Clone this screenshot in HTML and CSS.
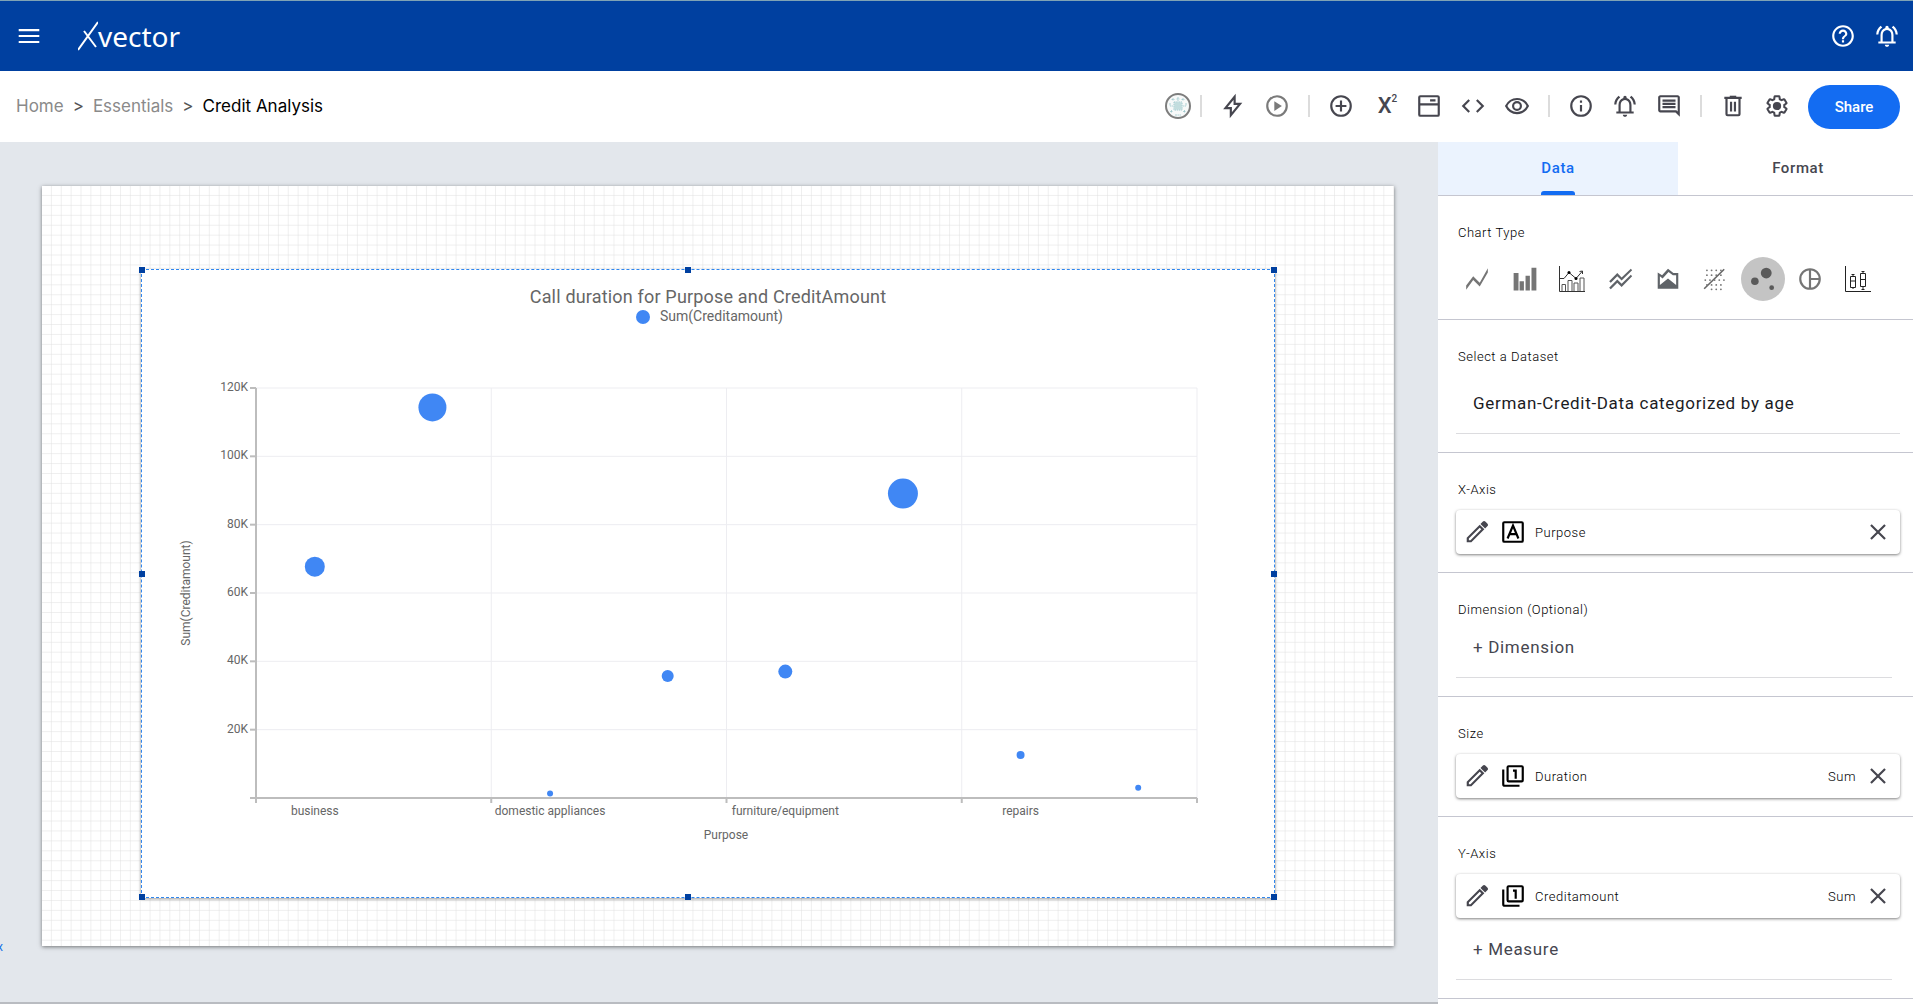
FILE: index.html
```html
<!DOCTYPE html>
<html lang="en">
<head>
    <meta charset="UTF-8">
    <meta name="viewport" content="width=device-width, initial-scale=1.0">
    <title>Xvector - Credit Analysis</title>
    <link rel="stylesheet" href="styles.css">
</head>
<body>
    <!-- shared icons -->
    <svg class="sprite" aria-hidden="true">
        <symbol id="bell" viewBox="0 0 24 24">
            <path d="M12 22c1.1 0 2-.9 2-2h-4c0 1.1.9 2 2 2zm6-6v-5c0-3.07-1.63-5.64-4.5-6.32V4c0-.83-.67-1.5-1.5-1.5s-1.5.67-1.5 1.5v.68C7.64 5.36 6 7.92 6 11v6H4v2h16v-2h-2zm-2 1H8v-6c0-2.48 1.51-4.5 4-4.5s4 2.02 4 4.5v6zM7.58 4.08L6.15 2.65C3.75 4.48 2.17 7.3 2.03 10.5h2c.15-2.65 1.51-4.97 3.55-6.42zm12.39 6.42h2c-.15-3.2-1.73-6.02-4.12-7.85l-1.42 1.43c2.02 1.45 3.39 3.77 3.54 6.42z"/>
        </symbol>
        <symbol id="pencil" viewBox="0 0 24 24">
            <path d="M2.500 17.200V21.500h4.300L18.800 9.500l-4.300-4.300zM6 19.500H4.500V18L14.500 8l1.500 1.500zM21.500 6.800c.9-.9.9-1.800 0-2.700l-1.600-1.600c-.9-.9-1.800-.9-2.700 0l-2 2 4.300 4.300z"/>
        </symbol>
        <symbol id="close" viewBox="0 0 24 24">
            <path d="M5.500 5.500l13 13M18.500 5.500l-13 13" fill="none" stroke="currentColor" stroke-width="2"/>
        </symbol>
        <symbol id="measure" viewBox="0 0 24 24">
            <rect x="7" y="3" width="14" height="14" rx="1" fill="none" stroke="currentColor" stroke-width="2"/>
            <path d="M3 6v13.500Q3 21 4.500 21H18" fill="none" stroke="currentColor" stroke-width="2"/>
            <path d="M12 6h3.500v8.500h-2V8H12z"/>
        </symbol>
    </svg>

    <header class="header">
        <button class="icon-btn" aria-label="Menu">
            <svg class="icon" viewBox="0 0 24 24"><path d="M2.500 6.500h19M2.500 12h19M2.500 17.500h19" fill="none" stroke="currentColor" stroke-width="2"/></svg>
        </button>
        <a class="logo" href="#" aria-label="Xvector">
            <svg width="20" height="30" viewBox="0 0 20 30"><path d="M0 29L20 1M6 10l12 16" fill="none" stroke="currentColor" stroke-width="2"/></svg>
            <span>vector</span>
        </a>
        <div class="header-actions">
            <button class="icon-btn" aria-label="Help">
                <svg class="icon" viewBox="0 0 24 24"><path d="M11 18h2v-2h-2v2zm1-16C6.480 2 2 6.480 2 12s4.480 10 10 10 10-4.480 10-10S17.520 2 12 2zm0 18c-4.410 0-8-3.590-8-8s3.590-8 8-8 8 3.590 8 8-3.590 8-8 8zm0-14c-2.210 0-4 1.790-4 4h2c0-1.100.9-2 2-2s2 .9 2 2c0 2-3 1.750-3 5h2c0-2.250 3-2.500 3-5 0-2.210-1.790-4-4-4z"/></svg>
            </button>
            <button class="icon-btn" aria-label="Notifications"><svg class="icon"><use href="#bell"/></svg></button>
        </div>
    </header>

    <div class="toolbar">
        <nav class="breadcrumb">
            <a href="#">Home</a>
            <span>&gt;</span>
            <a href="#">Essentials</a>
            <span>&gt;</span>
            <a class="current" href="#">Credit Analysis</a>
        </nav>
        <div class="tools">
            <svg class="avatar" viewBox="0 0 26 26">
                <circle cx="13" cy="13" r="12" fill="#f7f9f9" stroke="#7d7d7d" stroke-width="2"/>
                <g fill="none" stroke="#9cc8cc">
                    <rect x="9" y="9" width="8" height="8" stroke-dasharray="1.500 .7"/>
                    <path d="M11 9v8M13 9v8M15 9v8M9 11h8M9 13h8M9 15h8" stroke-width=".7"/>
                    <path d="M8 5v3M13 4v4M18 5v3M6.500 6.500h3M11.500 6h3M16.500 6.500h3M5 10v3h3M21 10v3h-3M6.500 17v3M19.500 17v3M5 18.500h3M18 18.500h3M10 22h6" stroke-dasharray="2 .5" stroke-width=".8"/>
                </g>
            </svg>
            <span class="sep"></span>
            <button class="icon-btn" aria-label="Actions">
                <svg class="icon" viewBox="0 0 24 24"><path d="M13.500 3.500L5 14h5v6.500L18.500 10h-5z" fill="none" stroke="currentColor" stroke-width="2"/></svg>
            </button>
            <button class="icon-btn muted" aria-label="Run">
                <svg class="icon" viewBox="0 0 24 24"><circle cx="12" cy="12" r="9" fill="none" stroke="currentColor" stroke-width="2"/><path d="M9.500 7.500v9L16.500 12z"/></svg>
            </button>
            <span class="sep"></span>
            <button class="icon-btn" aria-label="Add">
                <svg class="icon" viewBox="0 0 24 24"><g fill="none" stroke="currentColor" stroke-width="2"><circle cx="12" cy="12" r="9"/><path d="M12 7v10M7 12h10"/></g></svg>
            </button>
            <button class="icon-btn formula" aria-label="Formula">X<sup>2</sup></button>
            <button class="icon-btn" aria-label="Window">
                <svg class="icon" viewBox="0 0 24 24"><g fill="none" stroke="currentColor" stroke-width="2"><rect x="3" y="3" width="18" height="18" rx="1"/><path d="M3 10.500h18M13 6.800h5"/></g></svg>
            </button>
            <button class="icon-btn" aria-label="Code">
                <svg class="icon" viewBox="0 0 24 24"><path d="M8.500 6.500L3 12l5.500 5.500M15.500 6.500L21 12l-5.500 5.500" fill="none" stroke="currentColor" stroke-width="2"/></svg>
            </button>
            <button class="icon-btn" aria-label="Preview">
                <svg class="icon" viewBox="0 0 24 24"><path d="M12 5.500c4.300 0 8 2.500 10 6.500-2 4-5.700 6.500-10 6.500S4 16 2 12c2-4 5.700-6.500 10-6.500z" fill="none" stroke="currentColor" stroke-width="2"/><circle cx="12" cy="12" r="3.600" fill="none" stroke="currentColor" stroke-width="2"/></svg>
            </button>
            <span class="sep"></span>
            <button class="icon-btn" aria-label="Info">
                <svg class="icon" viewBox="0 0 24 24"><circle cx="12" cy="12" r="9" fill="none" stroke="currentColor" stroke-width="2"/><path d="M11 7h2v2h-2zM11 11h2v6h-2z"/></svg>
            </button>
            <button class="icon-btn" aria-label="Alerts"><svg class="icon"><use href="#bell"/></svg></button>
            <button class="icon-btn" aria-label="Comments">
                <svg class="icon" viewBox="0 0 24 24"><path d="M21.990 4c0-1.100-.89-2-1.990-2H4c-1.100 0-2 .9-2 2v12c0 1.100.9 2 2 2h14l4 4-.01-18zM20 4v13.170L18.830 16H4V4h16zM6 12h12v2H6zm0-3h12v2H6zm0-3h12v2H6z"/></svg>
            </button>
            <span class="sep"></span>
            <button class="icon-btn" aria-label="Delete">
                <svg class="icon" viewBox="0 0 24 24"><g fill="none" stroke="currentColor" stroke-width="2"><path d="M4 4.500h16M6 5v14.500q0 1 1 1h10q1 0 1-1V5M10.200 8v9M13.800 8v9"/></g><path d="M9 2.500h6v2H9z"/></svg>
            </button>
            <button class="icon-btn" aria-label="Settings">
                <svg class="icon" viewBox="0 0 24 24"><path transform="translate(1.200 1.200) scale(.9)" fill="none" stroke="currentColor" stroke-width="2.100" d="M19.430 12.980c.04-.32.07-.64.07-.98 0-.34-.03-.66-.07-.98l2.110-1.650c.19-.15.24-.42.12-.64l-2-3.460c-.09-.16-.26-.25-.44-.25-.06 0-.12.01-.17.03l-2.490 1c-.52-.4-1.080-.73-1.690-.98l-.38-2.650C14.460 2.180 14.250 2 14 2h-4c-.25 0-.46.18-.49.42l-.38 2.650c-.61.25-1.170.59-1.690.98l-2.490-1c-.06-.02-.12-.03-.18-.03-.17 0-.34.09-.43.25l-2 3.460c-.13.22-.07.49.12.64l2.110 1.650c-.04.32-.07.65-.07.98 0 .33.03.66.07.98l-2.110 1.650c-.19.15-.24.42-.12.64l2 3.460c.09.16.26.25.44.25.06 0 .12-.01.17-.03l2.490-1c.52.4 1.080.73 1.690.98l.38 2.650c.03.24.24.42.49.42h4c.25 0 .46-.18.49-.42l.38-2.650c.61-.25 1.170-.59 1.690-.98l2.490 1c.06.02.12.03.18.03.17 0 .34-.09.43-.25l2-3.460c.12-.22.07-.49-.12-.64z"/><circle cx="12" cy="12" r="3.800"/></svg>
            </button>
            <button class="share">Share</button>
        </div>
    </div>

    <main class="workspace">
        <div class="canvas">
            <span class="marker">x</span>
            <div class="sheet">
                <svg class="sheet-grid" aria-hidden="true">
                    <defs>
                        <pattern id="grid" width="9.870" height="9.930" patternUnits="userSpaceOnUse">
                            <path d="M0 9.930h9.870V0" fill="none" stroke="#e0e0e0"/>
                        </pattern>
                    </defs>
                    <rect width="100%" height="100%" fill="url(#grid)"/>
                </svg>
                <div class="widget">
                    <svg class="chart" id="chart" viewBox="0 0 1134 629"></svg>
                    <i class="handle n w"></i>
                    <i class="handle n mid-x"></i>
                    <i class="handle n e"></i>
                    <i class="handle mid-y w"></i>
                    <i class="handle mid-y e"></i>
                    <i class="handle s w"></i>
                    <i class="handle s mid-x"></i>
                    <i class="handle s e"></i>
                </div>
            </div>
        </div>

        <aside class="panel">
            <div class="tabs" role="tablist">
                <button class="tab active" role="tab" aria-selected="true">Data</button>
                <button class="tab" role="tab" aria-selected="false">Format</button>
            </div>

            <section class="section">
                <h3 class="label">Chart Type</h3>
                <div class="chart-types">
                    <button class="type-btn" aria-label="Line"><svg class="icon" viewBox="0 0 24 24"><path d="M2 22v-4l6.500-8.500 6 6L22 2v4l-7.500 13-6-6z" fill="#757575"/></svg></button>
                    <button class="type-btn" aria-label="Bar"><svg class="icon" viewBox="0 0 24 24"><path d="M1.500 6.500h4.500v16H1.500zM7 14h4v8.500H7zM12.500 9h4v13.500h-4zM18 1.500h4.500v21H18z" fill="#757575"/></svg></button>
                    <button class="type-btn" aria-label="Combo"><svg class="icon" viewBox="0 0 26 26"><g fill="none" stroke="#333"><path d="M.5 0v25.500H26"/><path d="M.5 12.500H5L10 6.500l7 6L23.500 5M20.500 5.500l3-.5v3"/><path d="M3 25v-6.500h3.500V25M9 25V14.500h4V25M15 25v-8h4v8M21 25V12h4v13" stroke="#555"/></g><circle cx="10" cy="6.500" r="1.500"/><circle cx="17" cy="12.500" r="1.500"/></svg></button>
                    <button class="type-btn" aria-label="Multi line"><svg class="icon" viewBox="0 0 24 24"><path d="M2 19.990l7.500-7.510 4 4 8.500-8.500 1.200 1.400-9.700 10.100-4-4-6 6.010zM3.500 15.490l6-6.010 4 4L23.200 3.900 22 2.500l-8.500 8-4-4L2 13.990z" fill="#5f6368"/></svg></button>
                    <button class="type-btn" aria-label="Area"><svg class="icon" viewBox="0 0 24 24"><path d="M2.500 6l4 2.500L12 2.500l5 4h4.500v14.500h-19zM4.500 9.500v8L12 11.500l7.500 6V8.500h-3l-4-3L7 11.500z" fill="#5f6368" fill-rule="evenodd"/></svg></button>
                    <button class="type-btn" aria-label="Scatter"><svg class="icon" viewBox="0 0 24 24"><path d="M2 21L20.500 3" fill="none" stroke="#666" stroke-width="1.500"/><path d="M4.500 4h17M4.500 8.500h17M3 13h19M4.500 17.500h17M8.800 21.500h12" fill="none" stroke="#777" stroke-width="1.600" stroke-linecap="round" stroke-dasharray=".1 4.200"/></svg></button>
                    <button class="type-btn selected" aria-label="Bubble"><svg class="icon" viewBox="0 0 24 24"><g fill="#5a5a5a"><circle cx="15" cy="6.500" r="5"/><circle cx="4.500" cy="14" r="3.500"/><circle cx="20" cy="20" r="2.200"/></g></svg></button>
                    <button class="type-btn" aria-label="Pie"><svg class="icon" viewBox="0 0 24 24"><g fill="none" stroke="#757575" stroke-width="2"><circle cx="12" cy="12" r="9"/><path d="M12 3v18M12 12h9"/></g></svg></button>
                    <button class="type-btn" aria-label="Box plot"><svg class="icon" viewBox="0 0 26 26"><path d="M.5 0v25.500H26M5.500 10.500h5v11h-5zM5.500 15h5M8 8v2.500M8 21.500V23M15.500 7.500h5v13h-5zM15.500 13.500h5M18 5v2.500M18 20.500V24M6.500 8.500h3M16.500 5.500h3M16.500 23.500h3" fill="none" stroke="#222"/></svg></button>
                </div>
            </section>

            <section class="section">
                <label class="label" for="dataset">Select a Dataset</label>
                <select class="field dataset" id="dataset">
                    <option>German-Credit-Data categorized by age</option>
                </select>
            </section>

            <section class="section">
                <h3 class="label">X-Axis</h3>
                <div class="card">
                    <button class="card-btn" aria-label="Edit"><svg class="icon"><use href="#pencil"/></svg></button>
                    <svg class="icon kind" viewBox="0 0 24 24"><rect x="3" y="3" width="18" height="18" rx="1" fill="none" stroke="currentColor" stroke-width="2"/><path d="M7 18l5-12 5 12M9 14h6" fill="none" stroke="currentColor" stroke-width="2"/></svg>
                    <span class="card-name">Purpose</span>
                    <button class="card-btn" aria-label="Remove"><svg class="icon"><use href="#close"/></svg></button>
                </div>
            </section>

            <section class="section">
                <h3 class="label">Dimension (Optional)</h3>
                <button class="field add">+ Dimension</button>
            </section>

            <section class="section">
                <h3 class="label">Size</h3>
                <div class="card">
                    <button class="card-btn" aria-label="Edit"><svg class="icon"><use href="#pencil"/></svg></button>
                    <svg class="icon kind"><use href="#measure"/></svg>
                    <span class="card-name">Duration</span>
                    <span>Sum</span>
                    <button class="card-btn" aria-label="Remove"><svg class="icon"><use href="#close"/></svg></button>
                </div>
            </section>

            <section class="section">
                <h3 class="label">Y-Axis</h3>
                <div class="card">
                    <button class="card-btn" aria-label="Edit"><svg class="icon"><use href="#pencil"/></svg></button>
                    <svg class="icon kind"><use href="#measure"/></svg>
                    <span class="card-name">Creditamount</span>
                    <span>Sum</span>
                    <button class="card-btn" aria-label="Remove"><svg class="icon"><use href="#close"/></svg></button>
                </div>
                <button class="field add measure">+ Measure</button>
            </section>
        </aside>
    </main>

    <script src="chart.js"></script>
</body>
</html>
```

FILE: styles.css
```css
* { box-sizing: border-box; }
body {
    margin: 0;
    height: 100vh;
    display: flex;
    flex-direction: column;
    overflow: hidden;
    font-family: Roboto, sans-serif;
    color: #1b1b1f;
    background: #fff;
}
button {
    border: 0;
    padding: 0;
    background: none;
    font-family: inherit;
    color: inherit;
    cursor: pointer;
}
a { color: inherit; text-decoration: none; }
.sprite { display: none; }
.icon { width: 26px; height: 26px; fill: currentColor; flex: none; }
.icon-btn {
    width: 44px;
    height: 44px;
    display: flex;
    align-items: center;
    justify-content: center;
}

/* top bar */
.header {
    display: flex;
    align-items: center;
    height: 71px;
    flex: none;
    padding: 0 4px 0 7px;
    border-top: 1px solid #7fa3b5;
    background: #0040a0;
    color: #fff;
}
.logo {
    display: flex;
    align-items: center;
    margin-left: 27px;
    font-family: "Noto Sans", sans-serif;
    font-size: 28px;
    line-height: 40px;
}
.header-actions { display: flex; margin-left: auto; }

/* breadcrumb and tools */
.toolbar {
    display: flex;
    align-items: center;
    justify-content: space-between;
    height: 71px;
    flex: none;
    padding: 0 13px 2px 16px;
}
.breadcrumb {
    display: flex;
    gap: 9px;
    font-family: Inter, sans-serif;
    font-size: 17px;
    color: #8a8a8a;
}
.breadcrumb span { color: #555; }
.breadcrumb .current { color: #000; }
.tools { display: flex; align-items: center; color: #46464f; }
.avatar { width: 26px; height: 26px; }
.sep { width: 2px; height: 22px; margin: 0 9px; background: #dcdcdc; }
.muted { color: #7a7a7a; }
.formula { padding-left: 5px; font-size: 22px; font-weight: 500; }
.formula sup { align-self: flex-start; margin-top: 9px; font-size: 10px; line-height: 12px; }
.share {
    width: 92px;
    height: 44px;
    margin: 2px 0 0 9px;
    border-radius: 22px;
    background: #136cf2;
    color: #fff;
    font-size: 15px;
    font-weight: 500;
}

/* canvas */
.workspace { display: flex; flex: 1; min-height: 0; }
.canvas {
    position: relative;
    flex: 1;
    padding: 44px 44px 56px 42px;
    border-bottom: 2px solid #b9bcc1;
    background: #e3e7ec;
}
.marker {
    position: absolute;
    left: -3px;
    bottom: 48px;
    font-size: 12px;
    color: #1a73e8;
}
.sheet {
    position: relative;
    height: 100%;
    padding: 83px 119px 48px 99px;
    background: #fff;
    box-shadow: 0 1px 4px rgba(0, 0, 0, .5);
}
.sheet-grid { position: absolute; inset: 0; width: 100%; height: 100%; }
.widget {
    position: relative;
    height: 100%;
    background: #fff;
    border: 1px dashed #2f86ee;
    box-shadow: 0 1px 3px rgba(0, 0, 0, .4);
}
.chart { position: absolute; inset: -1px; width: calc(100% + 2px); height: calc(100% + 2px); }
.chart text { font-size: 12px; fill: #666; }
.chart .title { font-size: 18px; letter-spacing: .01em; }
.chart .legend { font-size: 14px; }
.middle { text-anchor: middle; }
.end { text-anchor: end; }
.grid-line { stroke: #ededf1; stroke-width: 1; }
.axis-line { stroke: #bdbdbd; stroke-width: 2; }
.bubble { fill: #4087f4; }
.handle { position: absolute; width: 6px; height: 6px; background: #0040a0; }
.handle.n { top: -3px; }
.handle.s { bottom: -3px; }
.handle.w { left: -3px; }
.handle.e { right: -3px; }
.handle.mid-x { left: 48%; }
.handle.mid-y { top: 48%; }

/* side panel */
.panel {
    width: 475px;
    flex: none;
    overflow: hidden;
    background: #fff;
    color: #000;
    font-size: 13px;
    font-weight: 300;
    letter-spacing: .04em;
}
.tabs { display: flex; width: calc(100% + 5px); height: 54px; border-bottom: 1px solid #c5c6d0; }
.tab {
    position: relative;
    flex: 1;
    padding-bottom: 2px;
    font-size: 15px;
    font-weight: 500;
    letter-spacing: .04em;
    color: #46464f;
}
.tab.active { background: #ebf3fe; color: #136cf2; }
.tab.active::after {
    content: "";
    position: absolute;
    left: calc(50% - 17px);
    bottom: 0;
    width: 34px;
    height: 4px;
    border-radius: 3px 3px 0 0;
    background: #136cf2;
}
.section { padding: 28px 13px 18px 18px; border-bottom: 1px solid #c5c6d0; }
.label {
    display: block;
    margin: 0 0 11px 2px;
    font-size: 13px;
    font-weight: 300;
    line-height: 18px;
}
.chart-types {
    display: flex;
    justify-content: space-between;
    margin: 15px 20px 0 -1px;
}
.type-btn {
    display: flex;
    align-items: center;
    justify-content: center;
    width: 44px;
    height: 44px;
    border-radius: 50%;
}
.type-btn.selected { background: #c4c4c4; }
.field {
    display: block;
    width: 100%;
    height: 57px;
    padding: 0 17px 4px;
    border: 0;
    border-bottom: 1px solid #dcdcdf;
    background: none;
    font-family: inherit;
    font-size: 17px;
    letter-spacing: .04em;
    text-align: left;
    color: #1b1b1f;
}
.dataset { appearance: none; }
.add { width: calc(100% - 8px); margin-top: -9px; color: #46464f; }
.add.measure { margin-top: 5px; }
.card {
    display: flex;
    align-items: center;
    height: 44px;
    padding: 0 9px 0 8px;
    border-radius: 4px;
    box-shadow: 0 1px 3px rgba(0, 0, 0, .5);
}
.card-btn { display: flex; color: #46464f; }
.kind { margin: 0 9px 0 10px; color: #000; }
.card-name { flex: 1; }
.card-name ~ .card-btn { margin-left: 9px; }
```

FILE: chart.js
```js
const plot = { left: 115, right: 1056, top: 119, bottom: 529 };
const slots = 8;
const labels = [
    { text: "business", slot: 0 },
    { text: "domestic appliances", slot: 2 },
    { text: "furniture/equipment", slot: 4 },
    { text: "repairs", slot: 6 }
];
const points = [
    { value: 67700, r: 10 }, { value: 114300, r: 14 }, { value: 1300, r: 3 }, { value: 35700, r: 6 },
    { value: 37000, r: 7 }, { value: 89100, r: 15 }, { value: 12600, r: 4 }, { value: 3000, r: 3 }
];
const step = (plot.right - plot.left) / slots;
const yPos = value => plot.bottom - value / 120000 * (plot.bottom - plot.top);
const xPos = slot => plot.left + step * (slot + 0.5);
const line = (cls, x1, y1, x2, y2) => `<line class="${cls}" x1="${x1}" y1="${y1}" x2="${x2}" y2="${y2}"/>`;

let out = `<text class="title middle" x="567" y="34">Call duration for Purpose and CreditAmount</text>`;
out += `<circle class="bubble" cx="502" cy="48" r="7"/><text class="legend" x="519" y="52">Sum(Creditamount)</text>`;

for (let v = 20000; v <= 120000; v += 20000) {
    out += line("grid-line", plot.left, yPos(v), plot.right, yPos(v));
    out += line("axis-line", plot.left - 6, yPos(v), plot.left, yPos(v));
    out += `<text class="end" x="107" y="${yPos(v) + 3}">${v / 1000}K</text>`;
}
for (let i = 2; i <= slots; i += 2) {
    const x = plot.left + step * i;
    out += line("grid-line", x, plot.top, x, plot.bottom);
    out += line("axis-line", x, plot.bottom, x, plot.bottom + 5);
}
out += line("axis-line", plot.left, plot.top, plot.left, plot.bottom + 5);
out += line("axis-line", plot.left - 6, plot.bottom, plot.right, plot.bottom);

labels.forEach(l => {
    out += `<text class="middle" x="${xPos(l.slot)}" y="546">${l.text}</text>`;
});
out += `<text class="middle" x="585" y="570">Purpose</text>`;
out += `<text class="middle" transform="translate(49 324) rotate(-90)">Sum(Creditamount)</text>`;

points.forEach((p, i) => {
    out += `<circle class="bubble" cx="${xPos(i)}" cy="${yPos(p.value)}" r="${p.r}"/>`;
});
document.getElementById("chart").innerHTML = out;
```
